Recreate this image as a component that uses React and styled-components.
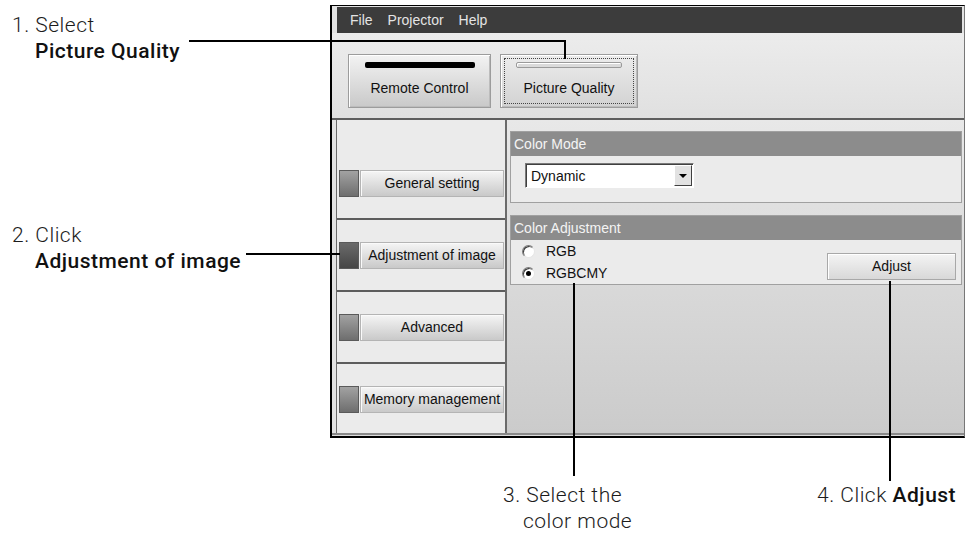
import React from 'react';
import styled, { createGlobalStyle } from 'styled-components';

const GlobalStyle = createGlobalStyle`
  html, body {
    margin: 0;
    padding: 0;
    background: #ffffff;
  }
  * {
    box-sizing: border-box;
  }
`;

const Figure = styled.div`
  position: relative;
  width: 966px;
  height: 533px;
  padding: 5px 0 0 330px;
  overflow: hidden;
  font-family: 'Liberation Sans', Arial, sans-serif;
`;

// The application window
const Window = styled.div`
  width: 635px;
  border-top: 1px solid #000;
  border-left: 2px solid #000;
  border-right: 1px solid #777;
  border-bottom: 2px solid #000;
  background: #e2e2e2;
  font-size: 14px;
  color: #111;
`;

const MenuBar = styled.div`
  margin: 1px 2px 0 5px;
  height: 26px;
  background: #3c3c3c;
  display: flex;
  align-items: center;
  gap: 15px;
  padding-left: 13px;
  color: #e4e4e4;
`;

const Toolbar = styled.div`
  height: 85px;
  display: flex;
  align-items: flex-start;
  gap: 9px;
  padding: 21px 0 0 16px;
  background: linear-gradient(#ececec, #e0e0e0);
`;

const ToolButton = styled.div`
  position: relative;
  width: ${p => p.$w}px;
  height: 54px;
  border: 1px solid #9c9c9c;
  box-shadow: inset 1px 1px 0 #fff, inset -1px -1px 0 #bcbcbc;
  background: ${p => p.$pressed
    ? 'linear-gradient(#ececec, #d2d2d2)'
    : 'linear-gradient(#f3f3f3, #c9c9c9)'};
  display: flex;
  flex-direction: column;
  align-items: center;
  padding-top: 7px;

  ${p => p.$focused && `
    &::after {
      content: '';
      position: absolute;
      inset: 3px;
      border: 1px dotted #444;
    }
  `}
`;

const ToolBar = styled.div`
  width: ${p => p.$w}px;
  height: 6px;
  border-radius: 2px;
  background: ${p => (p.$on ? '#000' : '#dadada')};
  border: ${p => (p.$on ? 'none' : '1px solid #9a9a9a')};
  box-shadow: ${p => (p.$on ? 'none' : 'inset 1px 1px 0 #fff')};
`;

const ToolLabel = styled.div`
  margin-top: 12px;
  line-height: 16px;
`;

const Separator = styled.div`
  height: 2px;
  background: #5e5e5e;
`;

const Body = styled.div`
  display: flex;
  height: 313px;
  padding-left: 4px;
`;

const Sidebar = styled.div`
  width: 171px;
  border-left: 1px solid #6a6a6a;
  border-right: 2px solid #6a6a6a;
  background: #ebebeb;
  display: flex;
  flex-direction: column;
`;

const Section = styled.div`
  height: ${p => p.$h}px;
  border-bottom: ${p => (p.$last ? 'none' : '2px solid #5c5c5c')};
  display: flex;
  align-items: flex-end;
  padding: 0 1px ${p => (p.$last ? 20 : 21)}px 2px;
`;

const SideButton = styled.div`
  display: flex;
  width: 100%;
  height: 27px;
`;

const Indicator = styled.div`
  width: 20px;
  border: 1px solid #5a5a5a;
  background: ${p => p.$active
    ? 'linear-gradient(#6a6a6a, #464646)'
    : 'linear-gradient(#a2a2a2, #6e6e6e)'};
`;

const SideLabel = styled.div`
  flex: 1;
  margin-left: 1px;
  border: 1px solid #b4b4b4;
  box-shadow: inset 1px 1px 0 #fafafa;
  background: linear-gradient(#f5f5f5, #c9c9c9);
  text-align: center;
  line-height: 25px;
  white-space: nowrap;
`;

const Content = styled.div`
  flex: 1;
  padding: 11px 2px 0 3px;
  background: linear-gradient(#e8e8e8, #cbcbcb);
  display: flex;
  flex-direction: column;
  gap: 12px;
`;

const Group = styled.div`
  border: 1px solid #a0a0a0;
  background: #ebebeb;
`;

const GroupHeader = styled.div`
  height: 24px;
  line-height: 24px;
  padding-left: 3px;
  background: #8c8c8c;
  color: #f4f4f4;
`;

const GroupBody = styled.div`
  height: ${p => p.$h}px;
  display: flex;
  align-items: flex-start;
  padding: ${p => p.$pad};
`;

const Select = styled.div`
  width: 169px;
  height: 25px;
  border: 1px solid;
  border-color: #7a7a7a #fff #fff #7a7a7a;
  box-shadow: inset 1px 1px 0 #404040;
  background: #fff;
  display: flex;
  align-items: center;
  padding-left: 5px;
`;

const SelectArrow = styled.div`
  margin-left: auto;
  margin-right: 1px;
  width: 18px;
  height: 21px;
  background: #e2e2e2;
  border: 1px solid;
  border-color: #fff #404040 #404040 #fff;
  display: flex;
  align-items: center;
  justify-content: center;

  &::before {
    content: '';
    border-left: 4px solid transparent;
    border-right: 4px solid transparent;
    border-top: 4px solid #000;
  }
`;

const RadioList = styled.div`
  display: flex;
  flex-direction: column;
`;

const RadioRow = styled.div`
  display: flex;
  align-items: center;
  gap: 11px;
  height: 22px;
`;

const Radio = styled.div`
  width: 13px;
  height: 13px;
  border-radius: 50%;
  border: 1px solid #7a7a7a;
  border-right-color: #e6e6e6;
  border-bottom-color: #e6e6e6;
  box-shadow: inset 1px 1px 0 #3c3c3c;
  background: #fff;
  display: flex;
  align-items: center;
  justify-content: center;

  &::after {
    content: '';
    width: 5px;
    height: 5px;
    border-radius: 50%;
    background: ${p => (p.$checked ? '#000' : 'transparent')};
  }
`;

const PushButton = styled.div`
  margin: 13px 5px 0 auto;
  width: 129px;
  height: 27px;
  border: 1px solid #a8a8a8;
  box-shadow: inset 1px 1px 0 #fff;
  background: linear-gradient(#f4f4f4, #d8d8d8);
  text-align: center;
  line-height: 25px;
`;

const Footer = styled.div`
  height: 3px;
  border-top: 2px solid #8a8a8a;
  background: #dcdcdc;
`;

// Callouts around the screenshot
const Leaders = styled.svg`
  position: absolute;
  top: 0;
  left: 0;
  pointer-events: none;
`;

const Callout = styled.div`
  position: absolute;
  left: ${p => p.$x}px;
  top: ${p => p.$y}px;
  font-family: Roboto, 'Liberation Sans', Arial, sans-serif;
  font-size: 21px;
  font-weight: 300;
  line-height: 26px;
  letter-spacing: 0.5px;
  color: #1c1c1c;
  white-space: nowrap;
`;

const Line = styled.span`
  display: block;
  padding-left: ${p => p.$indent || 0}px;
`;

const Strong = styled.span`
  font-weight: 500;
  color: #111;
`;

const sections = [
  { label: 'General setting', h: 100 },
  { label: 'Adjustment of image', h: 72, active: true },
  { label: 'Advanced', h: 72 },
  { label: 'Memory management', h: 69, last: true },
];

export default function App() {
  return (
    <>
      <GlobalStyle />
      <Figure>
        <Window>
          <MenuBar>
            <span>File</span>
            <span>Projector</span>
            <span>Help</span>
          </MenuBar>

          <Toolbar>
            <ToolButton $w={143}>
              <ToolBar $w={110} $on />
              <ToolLabel>Remote Control</ToolLabel>
            </ToolButton>
            <ToolButton $w={138} $pressed $focused>
              <ToolBar $w={106} />
              <ToolLabel>Picture Quality</ToolLabel>
            </ToolButton>
          </Toolbar>

          <Separator />

          <Body>
            <Sidebar>
              {sections.map(s => (
                <Section key={s.label} $h={s.h} $last={s.last}>
                  <SideButton>
                    <Indicator $active={s.active} />
                    <SideLabel>{s.label}</SideLabel>
                  </SideButton>
                </Section>
              ))}
            </Sidebar>

            <Content>
              <Group>
                <GroupHeader>Color Mode</GroupHeader>
                <GroupBody $h={46} $pad="7px 0 0 14px">
                  <Select>
                    Dynamic
                    <SelectArrow />
                  </Select>
                </GroupBody>
              </Group>

              <Group>
                <GroupHeader>Color Adjustment</GroupHeader>
                <GroupBody $h={44} $pad="0 0 0 11px">
                  <RadioList>
                    <RadioRow>
                      <Radio />
                      RGB
                    </RadioRow>
                    <RadioRow>
                      <Radio $checked />
                      RGBCMY
                    </RadioRow>
                  </RadioList>
                  <PushButton>Adjust</PushButton>
                </GroupBody>
              </Group>
            </Content>
          </Body>

          <Footer />
        </Window>

        <Leaders width="966" height="533" viewBox="0 0 966 533">
          <g fill="none" stroke="#000" strokeWidth="2">
            <path d="M189 41 H565 V59" />
            <path d="M246 254 H340" />
            <path d="M574 283 V476" />
            <path d="M890 281 V481" />
          </g>
        </Leaders>

        <Callout $x={12} $y={12}>
          <Line>1. Select</Line>
          <Line $indent={23}><Strong>Picture Quality</Strong></Line>
        </Callout>

        <Callout $x={12} $y={222}>
          <Line>2. Click</Line>
          <Line $indent={23}><Strong>Adjustment of image</Strong></Line>
        </Callout>

        <Callout $x={503} $y={482}>
          <Line>3. Select the</Line>
          <Line $indent={20}>color mode</Line>
        </Callout>

        <Callout $x={817} $y={482}>
          <Line>4. Click <Strong>Adjust</Strong></Line>
        </Callout>
      </Figure>
    </>
  );
}
